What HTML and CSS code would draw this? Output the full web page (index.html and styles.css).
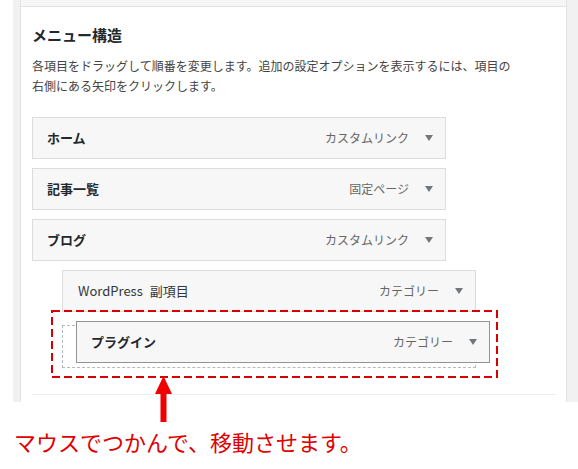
FILE: index.html
```html
<!DOCTYPE html>
<html lang="ja">
<head>
<meta charset="utf-8">
<title>メニュー構造</title>
<link rel="stylesheet" href="styles.css">
</head>
<body>
<div class="page">
  <div class="admin">
    <div class="panel">
      <div class="panel-top"></div>
      <div class="panel-body">
        <h3 class="title">メニュー構造</h3>
        <p class="desc">各項目をドラッグして順番を変更します。追加の設定オプションを表示するには、項目の<br>右側にある矢印をクリックします。</p>
        <ul class="menu">
          <li class="item">
            <span class="item-title">ホーム</span>
            <span class="item-controls"><span class="item-type">カスタムリンク</span><span class="toggle"></span></span>
          </li>
          <li class="item">
            <span class="item-title">記事一覧</span>
            <span class="item-controls"><span class="item-type">固定ページ</span><span class="toggle"></span></span>
          </li>
          <li class="item">
            <span class="item-title">ブログ</span>
            <span class="item-controls"><span class="item-type">カスタムリンク</span><span class="toggle"></span></span>
          </li>
          <li class="item depth-1">
            <span class="item-title light">WordPress<span class="sub">副項目</span></span>
            <span class="item-controls"><span class="item-type">カテゴリー</span><span class="toggle"></span></span>
          </li>
          <li class="placeholder"></li>
        </ul>
        <div class="footer-line"></div>
      </div>
    </div>
  </div>

  <div class="item dragging">
    <span class="item-title">プラグイン</span>
    <span class="item-controls"><span class="item-type">カテゴリー</span><span class="toggle"></span></span>
  </div>

  <svg class="drag-outline" width="447" height="68" viewBox="0 0 447 68">
    <rect x="1" y="1" width="445" height="66" fill="none" stroke="#d60000" stroke-width="2" stroke-dasharray="8 4"/>
  </svg>

  <svg class="up-arrow" width="19" height="47" viewBox="0 0 19 47">
    <polygon points="9.5,0 18,18 12.5,18 12.5,46 6.5,46 6.5,18 1,18" fill="#f00000"/>
  </svg>

  <p class="note">マウスでつかんで、移動させます。</p>
</div>
</body>
</html>
```

FILE: styles.css
```css
html, body {
  margin: 0;
  padding: 0;
  background: #ffffff;
}

body {
  font-family: "Noto Sans CJK JP", "Noto Sans", sans-serif;
  color: #23282d;
}

.page {
  position: relative;
  width: 578px;
  height: 469px;
  overflow: hidden;
}

.admin {
  margin-left: 13px;
  width: 565px;
  height: 402px;
  background: #f1f1f1;
  overflow: hidden;
}

.panel {
  margin-left: 7px;
  width: 545px;
  height: 402px;
  background: #ffffff;
  border-left: 1px solid #e2e2e2;
  border-right: 1px solid #e2e2e2;
}

.panel-top {
  height: 6px;
  background: #f6f6f6;
  border-bottom: 1px solid #e2e2e2;
}

.panel-body {
  padding: 18px 10px 0 11px;
}

.title {
  margin: 0;
  font-size: 15px;
  line-height: 20px;
  font-weight: 700;
  color: #23282d;
}

.desc {
  margin: 11px 0 0;
  font-size: 12px;
  line-height: 19.5px;
  color: #444;
}

.menu {
  list-style: none;
  margin: 22px 0 0;
  padding: 0;
}

.item {
  box-sizing: border-box;
  width: 414px;
  height: 42px;
  margin: 0 0 9px;
  padding: 0 12px 0 14px;
  display: flex;
  align-items: center;
  justify-content: space-between;
  background: #f7f7f7;
  border: 1px solid #dcdcdc;
}

.item.depth-1 {
  margin-left: 30px;
  padding-left: 15px;
}

.item-title {
  font-size: 13px;
  line-height: 20px;
  font-weight: 700;
  color: #23282d;
}

.item-title.light {
  font-weight: 400;
  color: #32373c;
}

.sub {
  margin-left: 7px;
  font-weight: 400;
}

.item-controls {
  display: flex;
  align-items: center;
}

.item-type {
  font-size: 12px;
  line-height: 20px;
  color: #666;
}

.toggle {
  width: 0;
  height: 0;
  margin-left: 16px;
  border-left: 4px solid transparent;
  border-right: 4px solid transparent;
  border-top: 6px solid #72777c;
}

.placeholder {
  box-sizing: border-box;
  width: 414px;
  height: 43px;
  margin: 13px 0 0 30px;
  border: 1px dashed #b4b9be;
}

.footer-line {
  margin-top: 26px;
  height: 8px;
  border-top: 1px solid #eeeeee;
}

.dragging {
  position: absolute;
  left: 76px;
  top: 321px;
  margin: 0;
  padding-left: 14px;
  border-color: #939393;
}

.drag-outline {
  position: absolute;
  left: 51px;
  top: 310px;
}

.up-arrow {
  position: absolute;
  left: 154px;
  top: 376px;
}

.note {
  position: absolute;
  left: 14px;
  top: 426px;
  margin: 0;
  font-size: 22px;
  line-height: 30px;
  color: #e00000;
  white-space: nowrap;
}
```
